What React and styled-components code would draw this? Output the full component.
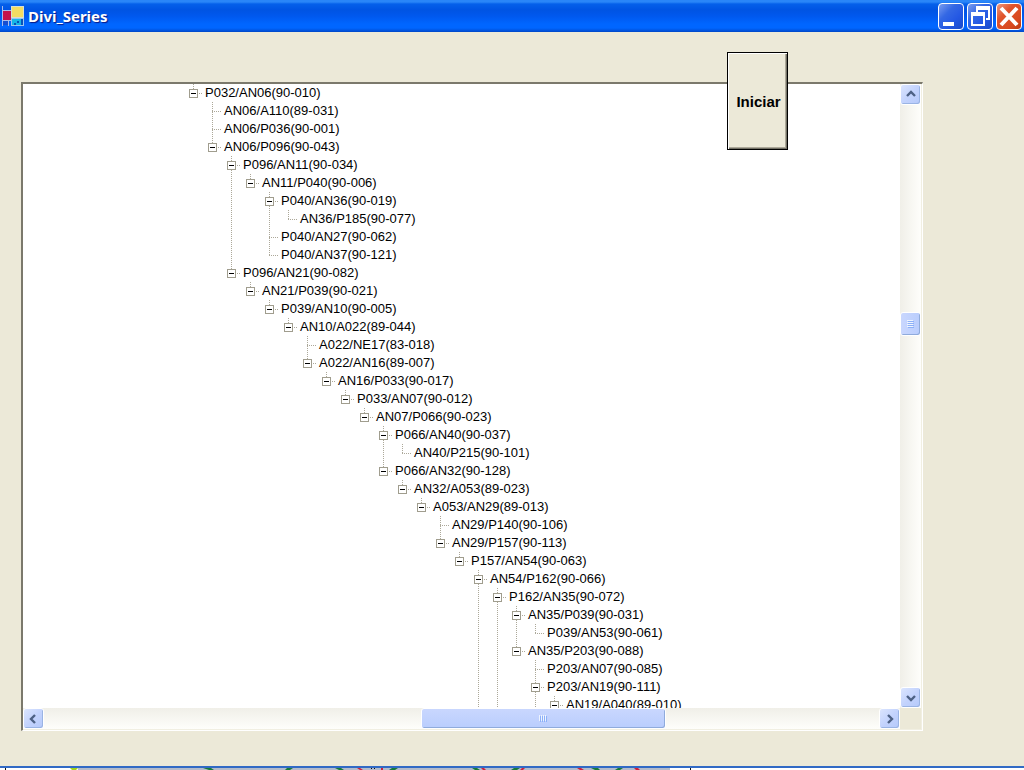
import React, { useState } from "react";
import styled, { createGlobalStyle } from "styled-components";

const series = [
  {
    label: "P032/AN06(90-010)",
    children: [
      { label: "AN06/A110(89-031)" },
      { label: "AN06/P036(90-001)" },
      {
        label: "AN06/P096(90-043)",
        children: [
          {
            label: "P096/AN11(90-034)",
            children: [
              {
                label: "AN11/P040(90-006)",
                children: [
                  {
                    label: "P040/AN36(90-019)",
                    children: [{ label: "AN36/P185(90-077)" }],
                  },
                  { label: "P040/AN27(90-062)" },
                  { label: "P040/AN37(90-121)" },
                ],
              },
            ],
          },
          {
            label: "P096/AN21(90-082)",
            children: chain(
              [
                "AN21/P039(90-021)",
                "P039/AN10(90-005)",
                "AN10/A022(89-044)",
              ],
              [
                { label: "A022/NE17(83-018)" },
                {
                  label: "A022/AN16(89-007)",
                  children: chain(
                    [
                      "AN16/P033(90-017)",
                      "P033/AN07(90-012)",
                      "AN07/P066(90-023)",
                    ],
                    [
                      {
                        label: "P066/AN40(90-037)",
                        children: [{ label: "AN40/P215(90-101)" }],
                      },
                      {
                        label: "P066/AN32(90-128)",
                        children: chain(
                          ["AN32/A053(89-023)", "A053/AN29(89-013)"],
                          [
                            { label: "AN29/P140(90-106)" },
                            {
                              label: "AN29/P157(90-113)",
                              children: [
                                {
                                  label: "P157/AN54(90-063)",
                                  children: [
                                    {
                                      label: "AN54/P162(90-066)",
                                      more: true,
                                      children: [
                                        {
                                          label: "P162/AN35(90-072)",
                                          more: true,
                                          children: [
                                            {
                                              label: "AN35/P039(90-031)",
                                              children: [
                                                { label: "P039/AN53(90-061)" },
                                              ],
                                            },
                                            {
                                              label: "AN35/P203(90-088)",
                                              children: [
                                                { label: "P203/AN07(90-085)" },
                                                {
                                                  label: "P203/AN19(90-111)",
                                                  more: true,
                                                  children: [
                                                    {
                                                      label:
                                                        "AN19/A040(89-010)",
                                                      children: [],
                                                    },
                                                  ],
                                                },
                                              ],
                                            },
                                          ],
                                        },
                                      ],
                                    },
                                  ],
                                },
                              ],
                            },
                          ]
                        ),
                      },
                    ]
                  ),
                },
              ]
            ),
          },
        ],
      },
    ],
  },
];

// nests single-child nodes, the last one holding the given children
function chain(labels, children) {
  return labels.reduceRight((acc, label) => [{ label, children: acc }], children);
}

function TreeNode({ node, last }) {
  const [open, setOpen] = useState(true);

  return (
    <Node $through={!last || node.more}>
      <Row>
        <Gutter>
          {node.children && (
            <Toggle
              type="button"
              aria-expanded={open}
              aria-label={node.label}
              onClick={() => setOpen(!open)}
            >
              <svg width="7" height="7" viewBox="0 0 7 7" shapeRendering="crispEdges">
                <path d={open ? "M1 3h5v1H1z" : "M1 3h5v1H1zM3 1h1v5H3z"} />
              </svg>
            </Toggle>
          )}
        </Gutter>
        <Label>{node.label}</Label>
      </Row>
      {open && node.children && <Branch nodes={node.children} />}
    </Node>
  );
}

function Branch({ nodes }) {
  return (
    <List>
      {nodes.map((node, i) => (
        <TreeNode key={node.label} node={node} last={i === nodes.length - 1} />
      ))}
    </List>
  );
}

const arrows = {
  up: "M1 6l4-4 4 4",
  down: "M1 3l4 4 4-4",
  left: "M6 1L2 5l4 4",
  right: "M3 1l4 4-4 4",
};

function Arrow({ dir, label }) {
  return (
    <ScrollButton type="button" aria-label={label}>
      <svg width="10" height="10" viewBox="0 0 10 10">
        <path d={arrows[dir]} fill="none" stroke="#4d6185" strokeWidth="2.4" />
      </svg>
    </ScrollButton>
  );
}

function App() {
  return (
    <Window>
      <GlobalStyle />
      <TitleBar>
        <svg width="22" height="20" viewBox="0 0 22 20" shapeRendering="crispEdges">
          <path d="M0 0h1v20H0zM0 4h9v1H0zM0 14h9v1H0zM6 14h1v6H6z" fill="#a9bdea" />
          <path d="M1 5h8v9H1z" fill="#c4124b" />
          <path d="M9 0h13v12H9z" fill="#d8dfd0" />
          <path d="M10 1h11v10H10z" fill="#f3dc62" />
          <path d="M9 12h13v8H9z" fill="#9cc4ee" />
          <path d="M10 13h9v6h-9z" fill="#15b7e6" />
          <path d="M19 13h2v6h-2zM12 17h2v2h-2zM15 15h2v2h-2z" fill="#0752ba" />
          <path d="M1 15h5v4H1z" fill="#174ed0" />
        </svg>
        <Title>Divi_Series</Title>
        <Caption type="button" aria-label="Minimize">
          <svg width="24" height="25" viewBox="0 0 24 25" shapeRendering="crispEdges">
            <path d="M4 18h11v4H4z" fill="#fff" />
          </svg>
        </Caption>
        <Caption type="button" aria-label="Restore">
          <svg width="24" height="25" viewBox="0 0 24 25" shapeRendering="crispEdges">
            <path
              d="M8 2h14v14h-4v-2h2V6H10v2H8zM3 8h14v14H3zM5 12v8h10v-8z"
              fill="#fff"
              fillRule="evenodd"
            />
          </svg>
        </Caption>
        <Caption type="button" aria-label="Close" $close>
          <svg width="24" height="25" viewBox="0 0 24 25">
            <path d="M4 4l16 17M20 4L4 21" stroke="#fff" strokeWidth="4" />
          </svg>
        </Caption>
      </TitleBar>

      <Form>
        <TreeBox>
          <Main>
            <TreeView>
              <Branch nodes={series} />
            </TreeView>
            <Track $vertical>
              <Arrow dir="up" label="Scroll up" />
              <Space $size={209} />
              <Thumb $size={22} $vertical>
                <svg width="7" height="8" viewBox="0 0 7 8" shapeRendering="crispEdges">
                  <path d="M0 0h6v1H0zM0 2h6v1H0zM0 4h6v1H0zM0 6h6v1H0z" fill="#eef4fe" />
                  <path d="M1 1h6v1H1zM1 3h6v1H1zM1 5h6v1H1zM1 7h6v1H1z" fill="#8cb0f8" />
                </svg>
              </Thumb>
              <Space $size={354} />
              <Arrow dir="down" label="Scroll down" />
            </Track>
          </Main>
          <Foot>
            <Track>
              <Arrow dir="left" label="Scroll left" />
              <Space $size={378} />
              <Thumb $size={244}>
                <svg width="8" height="7" viewBox="0 0 8 7" shapeRendering="crispEdges">
                  <path d="M0 0h1v6H0zM2 0h1v6H2zM4 0h1v6H4zM6 0h1v6H6z" fill="#eef4fe" />
                  <path d="M1 1h1v6H1zM3 1h1v6H3zM5 1h1v6H5zM7 1h1v6H7z" fill="#8cb0f8" />
                </svg>
              </Thumb>
              <Space $size={214} />
              <Arrow dir="right" label="Scroll right" />
            </Track>
            <Corner />
          </Foot>
        </TreeBox>
        <StartButton type="button">Iniciar</StartButton>
      </Form>

      <Strip viewBox="0 0 1024 2" preserveAspectRatio="none" aria-hidden="true">
        <path d="M0 0h1024v2H0z" fill="#fff" />
        <path d="M78 0h592v2H78z" fill="#b4bccb" />
        <path d="M5 0h1v2H5zM690 0h1v2h-1zM371 0h1v1h-1zM374 0h1v1h-1z" fill="#111" />
        <path d="M70 0h8l-2 2h-4z" fill="#a6d51c" />
        <path
          d="M203 0h8l3 2h-5zM287 0h6l-3 2h-5zM335 0h6l3 2h-5zM392 0h6l-3 2h-6zM472 0h5l3 2h-5zM514 0h6l-3 2h-6zM591 0h7l2 2h-5zM618 0h5l-3 2h-5z"
          fill="#187a3b"
        />
        <path
          d="M357 0h3l3 2h-3zM381 0h2v2h-2zM481 0h3l2 2h-3zM522 0h3l-2 2h-3zM577 0h4l3 2h-4zM634 0h4l2 2h-4z"
          fill="#d0213c"
        />
      </Strip>
    </Window>
  );
}

export default App;

const GlobalStyle = createGlobalStyle`
  * {
    box-sizing: border-box;
  }

  body {
    margin: 0;
    font-family: "Liberation Sans", Arial, sans-serif;
    color: #000;
  }

  button {
    font-family: inherit;
    padding: 0;
  }

  svg {
    display: block;
  }
`;

const Window = styled.div`
  height: 100vh;
  display: flex;
  flex-direction: column;
  background: #ece9d8;
`;

const TitleBar = styled.header`
  height: 32px;
  flex: none;
  display: flex;
  align-items: center;
  gap: 3px;
  padding: 0 2px;
  background: linear-gradient(
    to bottom,
    #2a86f8 0,
    #2a86f8 2px,
    #0560ea 4px,
    #0054e3 10px,
    #0058ee 16px,
    #0066ff 24px,
    #0066ff 28px,
    #0050d8 31px,
    #0046c4 32px
  );
`;

const Title = styled.h1`
  flex: 1;
  margin: 0;
  padding-left: 1px;
  font-family: "Trebuchet MS", "Noto Sans", sans-serif;
  font-size: 15px;
  font-weight: 700;
  line-height: 20px;
  color: #fff;
  text-shadow: 1px 1px 1px #0a1883;
`;

const Caption = styled.button`
  width: 26px;
  height: 27px;
  border: 1px solid #fff;
  border-radius: 4px;
  background: ${(p) =>
    p.$close
      ? "linear-gradient(135deg, #ee9a80, #e0542c 35%, #d8481e 75%, #b83a12)"
      : "linear-gradient(135deg, #7a9df0, #3468e4 35%, #2458e4 65%, #1a4ac8)"};
`;

const Form = styled.main`
  flex: 1;
  min-height: 0;
  position: relative;
  display: flex;
  padding: 50px 101px 35px 21px;
`;

const TreeBox = styled.section`
  flex: 1;
  min-width: 0;
  display: flex;
  flex-direction: column;
  padding: 0 1px 1px 0;
  background: #f1efe2;
  border: 1px solid #fff;
  border-width: 2px 1px 1px 2px;
  border-top-color: #7b796c;
  border-left-color: #7b796c;
`;

const Main = styled.div`
  flex: 1;
  min-height: 0;
  display: flex;
`;

const TreeView = styled.div`
  flex: 1;
  min-width: 0;
  overflow: hidden;
  padding-left: 161px;
  background: #fff;
`;

const List = styled.ul`
  list-style: none;
  margin: 0;
  padding: 0;
`;

/* the dotted guide runs through the subtree unless this is the last sibling */
const Node = styled.li`
  background: repeating-linear-gradient(
      to bottom,
      #aca899 0,
      #aca899 1px,
      transparent 1px,
      transparent 2px
    )
    9px 0 / 1px ${(p) => (p.$through ? "100%" : "10px")} no-repeat;

  & > ${List} {
    padding-left: 19px;
  }
`;

const Row = styled.div`
  display: flex;
  height: 18px;
  white-space: nowrap;
  background: repeating-linear-gradient(
      to right,
      #aca899 0,
      #aca899 1px,
      transparent 1px,
      transparent 2px
    )
    9px 9px / 10px 1px no-repeat;
`;

const Gutter = styled.span`
  width: 19px;
  flex: none;
  display: flex;
  justify-content: center;
  align-items: flex-end;
  padding-bottom: 4px;
`;

const Toggle = styled.button`
  width: 9px;
  height: 9px;
  border: 1px solid #a09d8e;
  background: #fff;
`;

const Label = styled.span`
  padding-left: 2px;
  font-size: 13px;
  line-height: 18px;
`;

const Track = styled.div`
  display: flex;
  flex-direction: ${(p) => (p.$vertical ? "column" : "row")};
  flex: ${(p) => (p.$vertical ? "none" : "1")};
  width: ${(p) => (p.$vertical ? "21px" : "auto")};
  height: ${(p) => (p.$vertical ? "auto" : "21px")};
  background: linear-gradient(
    ${(p) => (p.$vertical ? "to right" : "to bottom")},
    #f0efe8,
    #fefefb
  );
`;

const Space = styled.div`
  flex: ${(p) => p.$size} 1 0;
`;

const ScrollButton = styled.button`
  width: 21px;
  height: 21px;
  flex: none;
  display: flex;
  align-items: center;
  justify-content: center;
  border: 1px solid #fff;
  border-radius: 3px;
  background: linear-gradient(135deg, #dbe5fe, #c3d3fd 50%, #b5c9fa);
  box-shadow: inset -1px -1px 0 #9ab4e4;
`;

const Thumb = styled.div`
  flex: ${(p) => p.$size} 1 0;
  display: flex;
  align-items: center;
  justify-content: center;
  border: 1px solid #fff;
  border-radius: 3px;
  background: linear-gradient(
    ${(p) => (p.$vertical ? "to right" : "to bottom")},
    #c9d7fe,
    #b9cdfd
  );
  box-shadow: inset -1px -1px 0 #8fabdc;
`;

const Foot = styled.div`
  display: flex;
`;

const Corner = styled.div`
  width: 21px;
  background: #ece9d8;
`;

const StartButton = styled.button`
  position: absolute;
  top: 20px;
  right: 236px;
  width: 61px;
  height: 98px;
  padding-left: 2px;
  border: 1px solid #000;
  background: #ece9d8;
  box-shadow: inset 1px 1px 0 #fff, inset -1px -1px 0 #716f64,
    inset -2px -2px 0 #aca899;
  font-size: 15px;
  font-weight: 700;
  color: #000;
`;

const Strip = styled.svg`
  width: 100%;
  height: 4px;
  flex: none;
  border-top: 2px solid #316ac5;
`;
